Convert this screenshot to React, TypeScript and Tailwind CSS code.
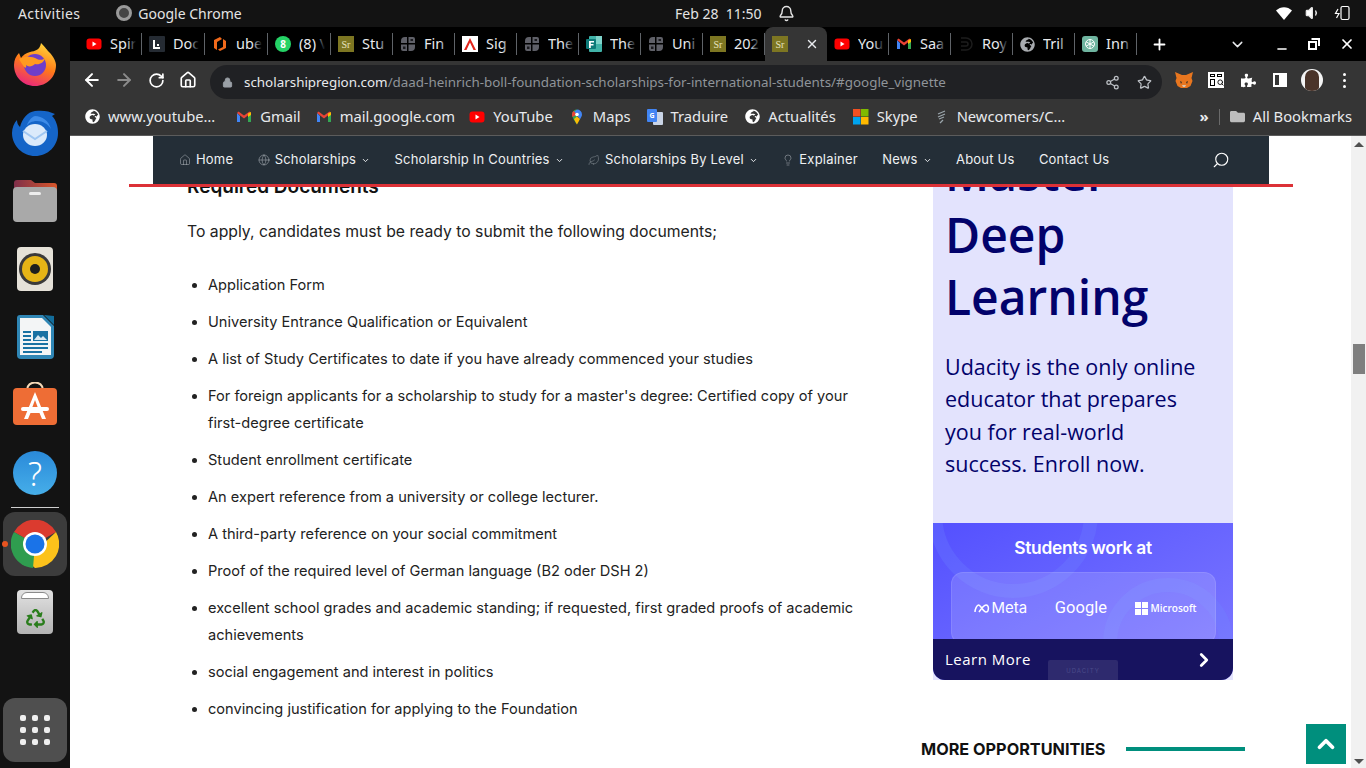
import type { ReactNode } from "react";
import { ArrowLeft, ArrowRight, Bell, ChevronDown, ChevronRight, ChevronUp, House, Lightbulb, Globe, Leaf, Lock, Minus, Plus, RotateCw, Search, Share2, Star, Volume1, X } from "lucide-react";
import { FaPuzzlePiece, FaFolder, FaGlobeAfrica, FaRecycle } from "react-icons/fa";

function YouTubeIcon() {
    return (
        <svg width="16" height="16" viewBox="0 0 16 16" className="shrink-0">
            <rect x="0.5" y="2.5" width="15" height="11" rx="3" fill="#f00" />
            <path d="M6.5 5.5v5l4-2.5z" fill="#fff" />
        </svg>
    );
}

function GmailIcon() {
    return (
        <svg width="16" height="16" viewBox="0 0 16 16" className="shrink-0">
            <path d="M1 4v9h3V7z" fill="#4285f4" />
            <path d="M15 4v9h-3V7z" fill="#34a853" />
            <path d="M1 4l7 5.4L15 4l-1.5-1.5L8 6.5 2.5 2.5z" fill="#ea4335" />
            <path d="M12 4.5L15 3v3l-3 2z" fill="#fbbc04" />
        </svg>
    );
}

function SrIcon() {
    return (
        <div className="w-4 h-4 shrink-0 bg-[#7d7622] flex items-center justify-center text-[10px] text-[#e8e4c0] font-['Liberation_Serif',serif]">
            Sr
        </div>
    );
}

function GridIcon() {
    return (
        <svg width="16" height="16" viewBox="0 0 16 16" className="shrink-0">
            <path d="M1 7V5a4 4 0 0 1 4-4h2v6zM8.500 1H13a2 2 0 0 1 2 2v4H8.500zM1 8.500h6V15H3a2 2 0 0 1-2-2zM8.500 8.500H15V11a4 4 0 0 1-4 4H8.500z" fill="#5f6068" />
            <path d="M3 10.500h2.500V13H3zM10.500 3H13v2h-2.500z" fill="#1a1a1e" />
        </svg>
    );
}

function GlobeFavicon() {
    return <FaGlobeAfrica size={15} className="shrink-0 text-white" />;
}

const tabs: { label: string; icon: ReactNode }[] = [
    { label: "Spir", icon: <YouTubeIcon /> },
    {
        label: "Doc",
        icon: (
            <svg width="16" height="16" viewBox="0 0 16 16" className="shrink-0">
                <rect width="16" height="16" rx="1" fill="#252b33" />
                <path d="M4 4h2v7h5v2H4zM8 8h2v2H8z" fill="#fff" />
            </svg>
        ),
    },
    {
        label: "ube",
        icon: (
            <svg width="16" height="16" viewBox="0 0 16 16" className="shrink-0">
                <path d="M8 1L2 4v8l3 2V6l5-3zM14 5v7l-6 3-2-1.500 5-2.500V3z" fill="#f26a1b" />
            </svg>
        ),
    },
    {
        label: "(8) V",
        icon: (
            <div className="relative w-4 h-4 shrink-0 rounded-full bg-[#25d366] flex items-center justify-center text-[10px] font-bold text-white">
                8
            </div>
        ),
    },
    { label: "Stu", icon: <SrIcon /> },
    { label: "Fin", icon: <GridIcon /> },
    {
        label: "Sig",
        icon: (
            <svg width="16" height="16" viewBox="0 0 16 16" className="shrink-0">
                <rect width="16" height="16" fill="#fff" />
                <path d="M8 2L2 14h2.500L8 6.500 11.500 14H14z" fill="#e1251b" />
            </svg>
        ),
    },
    { label: "The", icon: <GridIcon /> },
    {
        label: "The",
        icon: (
            <svg width="16" height="16" viewBox="0 0 16 16" className="shrink-0">
                <rect x="3" width="13" height="16" rx="1" fill="#41b3a8" />
                <rect x="10" width="6" height="8" fill="#7fd4cb" />
                <rect y="3" width="10" height="10" rx="1" fill="#0d7a78" />
                <path d="M3 5h5v1.500H4.800V8H7.500v1.500H4.800V12H3z" fill="#fff" />
            </svg>
        ),
    },
    { label: "Uni", icon: <GridIcon /> },
    { label: "202", icon: <SrIcon /> },
];

const tabsAfter: { label: string; icon: ReactNode }[] = [
    { label: "You", icon: <YouTubeIcon /> },
    { label: "Saa", icon: <GmailIcon /> },
    {
        label: "Roy",
        icon: (
            <svg width="16" height="16" viewBox="0 0 16 16" className="shrink-0" fill="none" stroke="#1c1c1c" strokeWidth="1.500">
                <path d="M3 2h5a6 6 0 0 1 0 12H3M3 6h5a2 2 0 0 1 0 4H3" />
            </svg>
        ),
    },
    { label: "Tril", icon: <FaGlobeAfrica size={15} className="shrink-0 text-[#a8abaf]" /> },
    {
        label: "Inn",
        icon: (
            <div className="w-4 h-4 shrink-0 rounded-[3px] bg-[#6fb5a0] flex items-center justify-center">
                <svg width="12" height="12" viewBox="0 0 12 12" fill="none" stroke="#fff" strokeWidth="1">
                    <circle cx="6" cy="6" r="4.500" />
                    <path d="M6 1.500v9M2 3.800l8 4.400M2 8.200l8-4.400" />
                </svg>
            </div>
        ),
    },
];

function Tab({ label, icon, wide }: { label: string; icon: ReactNode; wide?: boolean }) {
    return (
        <div className={`relative h-full shrink-0 flex items-center pl-[7px] gap-2 border-r border-[#5a5a5a] [border-image:linear-gradient(transparent_20%,#5f6368_20%,#5f6368_80%,transparent_80%)_1] ${wide ? "w-[63px]" : "w-[62px]"}`}>
            {icon}
            <div className="relative w-[26px] -mt-px overflow-hidden whitespace-nowrap text-[14.500px] text-[#e8eaed]">
                {label}
                <div className="absolute inset-y-0 right-0 w-2.5 bg-gradient-to-r from-transparent to-black" />
            </div>
        </div>
    );
}

const bookmarks: { label: string; icon: ReactNode; gap: string }[] = [
    { label: "www.youtube…", icon: <GlobeFavicon />, gap: "mr-[21px]" },
    { label: "Gmail", icon: <GmailIcon />, gap: "mr-[15px]" },
    { label: "mail.google.com", icon: <GmailIcon />, gap: "mr-[14px]" },
    { label: "YouTube", icon: <YouTubeIcon />, gap: "mr-[16px]" },
    {
        label: "Maps",
        icon: (
            <svg width="16" height="16" viewBox="0 0 16 16" className="shrink-0">
                <path d="M8 0.500a5 5 0 0 0-5 5c0 3.500 5 10 5 10z" fill="#34a853" />
                <path d="M8 0.500a5 5 0 0 1 5 5c0 1.500-1 3.200-2 4.700L5 3z" fill="#4285f4" />
                <path d="M4.500 2L8 5.500 3.500 8C3 7 3 6 3 5.500 3 4 3.500 3 4.500 2z" fill="#ea4335" />
                <path d="M11 10L8 15.500C7 14 6 12 5 10l3-2.500z" fill="#fbbc04" />
                <circle cx="8" cy="5.500" r="1.800" fill="#fff" />
            </svg>
        ),
        gap: "mr-[16px]",
    },
    {
        label: "Traduire",
        icon: (
            <svg width="16" height="16" viewBox="0 0 16 16" className="shrink-0">
                <rect x="6" y="3" width="10" height="13" rx="1" fill="#c9d4e6" />
                <rect width="10" height="13" rx="1" fill="#4285f4" />
                <text x="2.500" y="9" fontSize="7" fontWeight="700" fill="#fff">G</text>
            </svg>
        ),
        gap: "mr-[17px]",
    },
    { label: "Actualités", icon: <GlobeFavicon />, gap: "mr-[17px]" },
    {
        label: "Skype",
        icon: (
            <svg width="16" height="16" viewBox="0 0 16 16" className="shrink-0">
                <rect width="7.500" height="7.500" fill="#f25022" />
                <rect x="8" width="7.500" height="7.500" fill="#7fba00" />
                <rect y="8" width="7.500" height="7.500" fill="#00a4ef" />
                <rect x="8" y="8" width="7.500" height="7.500" fill="#ffb900" />
            </svg>
        ),
        gap: "mr-[15px]",
    },
    {
        label: "Newcomers/C…",
        icon: (
            <svg width="16" height="16" viewBox="0 0 16 16" className="shrink-0" fill="none" stroke="#9aa5ab" strokeWidth="1.300">
                <path d="M12 2L5 5M12 5L5 8M11 8l-5 2M10 11l-3 3" />
            </svg>
        ),
        gap: "",
    },
];

const docs = [
    "Application Form",
    "University Entrance Qualification or Equivalent",
    "A list of Study Certificates to date if you have already commenced your studies",
    "For foreign applicants for a scholarship to study for a master's degree: Certified copy of your first-degree certificate",
    "Student enrollment certificate",
    "An expert reference from a university or college lecturer.",
    "A third-party reference on your social commitment",
    "Proof of the required level of German language (B2 oder DSH 2)",
    "excellent school grades and academic standing; if requested, first graded proofs of academic achievements",
    "social engagement and interest in politics",
    "convincing justification for applying to the Foundation",
];

function DockSlot({ children }: { children: ReactNode }) {
    return <div className="h-[68px] flex items-center justify-center shrink-0">{children}</div>;
}

function Dock() {
    return (
        <aside className="w-[70px] shrink-0 bg-[#131313] flex flex-col pt-[4px] pb-[6px]">
            <DockSlot>
                <svg width="44" height="44" viewBox="0 0 44 44" className="-mt-[2px]">
                    <defs>
                        <linearGradient id="ffa" x1="0.7" y1="0" x2="0.3" y2="1">
                            <stop offset="0" stopColor="#ffd43a" />
                            <stop offset="0.5" stopColor="#ff7a18" />
                            <stop offset="1" stopColor="#e9257f" />
                        </linearGradient>
                    </defs>
                    <path d="M28 1c5 5 6 7 8 9 5 5 7 10 7 13 0 12-9 21-21 21S1 35 1 23c0-5 2-9 5-12l2 5c2-3 5-5 9-6 5-1 10-2 11-9z" fill="url(#ffa)" />
                    <circle cx="22" cy="23" r="11" fill="#6f3ec9" />
                    <path d="M6 17c6-3 13-3 18 0 4 2 7 0 8-1-1 5-6 7-10 6-3 3-7 3-9 1 1 5-2 3-7-6z" fill="#ff9a1f" />
                </svg>
            </DockSlot>
            <DockSlot>
                <svg width="48" height="48" viewBox="0 0 48 48">
                    <path d="M24 2c8-1 14 0 20 3l-3 2c4 4 6 10 6 17 0 13-10 23-23 23C12 47 1 37 1 24c0-5 2-10 5-13 0 3 1 5 3 7C11 10 16 3 24 2z" fill="#1565c8" />
                    <path d="M24 7c7 0 14 5 16 13-3-5-8-8-14-8-5 0-9 2-11 6 2-5 5-10 9-11z" fill="#3d8be8" />
                    <ellipse cx="24" cy="26" rx="12" ry="11" fill="#dbeafb" />
                    <path d="M12 22l12 8 12-8" fill="none" stroke="#9fc6f2" strokeWidth="2" />
                </svg>
            </DockSlot>
            <DockSlot>
                <svg width="44" height="44" viewBox="0 0 44 44">
                    <defs>
                        <linearGradient id="fold" x1="0" y1="0" x2="1" y2="0">
                            <stop offset="0" stopColor="#7e2f4a" />
                            <stop offset="1" stopColor="#d9572b" />
                        </linearGradient>
                    </defs>
                    <path d="M1 4a3 3 0 0 1 3-3h14l4 3h19a3 3 0 0 1 3 3v14H1z" fill="url(#fold)" />
                    <rect y="8" width="44" height="35" rx="4" fill="#a9a9a9" />
                    <rect x="16" y="13" width="12" height="3" rx="1.500" fill="#eee" />
                </svg>
            </DockSlot>
            <DockSlot>
                <svg width="36" height="44" viewBox="0 0 36 44">
                    <rect width="36" height="44" rx="4" fill="#e5e1d8" />
                    <circle cx="18" cy="22" r="16" fill="#3b3a3a" />
                    <circle cx="18" cy="22" r="13" fill="#e6b416" />
                    <circle cx="18" cy="22" r="5" fill="#1e1e1e" />
                </svg>
            </DockSlot>
            <DockSlot>
                <svg width="37" height="44" viewBox="0 0 37 44">
                    <path d="M3 0h23l11 11v29a4 4 0 0 1-4 4H4a4 4 0 0 1-4-4V3a3 3 0 0 1 3-3z" fill="#2f86b5" />
                    <path d="M3 3h22l9 9v28H3z" fill="#f3f5f6" />
                    <path d="M27 0l10 10V1z" fill="#136d9b" />
                    <path d="M6 16h8v2H6zM6 20h8v2H6zM6 24h8v2H6zM6 28h25v2H6zM6 32h25v2H6zM6 36h19v2H6z" fill="#1a72a3" />
                    <rect x="16" y="16" width="15" height="10" fill="#1a72a3" />
                    <path d="M17 25l4-5 3 3 2-2 4 4z" fill="#dbe9f1" />
                </svg>
            </DockSlot>
            <DockSlot>
                <svg width="44" height="44" viewBox="0 0 44 44" className="-mt-[2px]">
                    <path d="M14 8c0-10 16-10 16 0" fill="none" stroke="#f5d9b8" strokeWidth="2" />
                    <rect y="6" width="44" height="37" rx="4" fill="#ee6d35" />
                    <path d="M22 10L11 37h4l2.500-6h9l2.500 6h4zM19 26l3-8 3 8z" fill="#fff" />
                    <rect x="8" y="25" width="28" height="4" rx="2" fill="#fff" />
                </svg>
            </DockSlot>
            <DockSlot>
                <div className="w-[44px] h-[44px] rounded-full bg-gradient-to-b from-[#2a8ad9] to-[#46aee9] flex items-center justify-center text-white text-[33px] font-light font-['Noto_Sans',sans-serif] leading-none">
                    ?
                </div>
            </DockSlot>
            <div className="h-px bg-[#cfcfcf] mx-[11px] mb-[4px] shrink-0" />
            <div className="relative h-[64px] mx-[3px] rounded-xl bg-[#3c3c3c] flex items-center justify-center shrink-0">
                <div className="absolute -left-px top-[29px] w-[6px] h-[6px] rounded-full bg-[#e95420]" />
                <svg width="48" height="48" viewBox="0 0 48 48">
                    <path d="M24 24L3 12A24 24 0 0 1 45 12z" fill="#db3b2f" />
                    <path d="M45 12A24 24 0 0 1 24 48L15 40z" fill="#fcc21b" />
                    <path d="M24 24L3 12A24 24 0 0 0 22 48z" fill="#2f9d4f" />
                    <circle cx="24" cy="24" r="12" fill="#fff" />
                    <circle cx="24" cy="24" r="9.500" fill="#1a73e8" />
                </svg>
            </div>
            <div className="h-[68px] mt-[2px] flex items-center justify-center shrink-0">
                <div className="relative w-[36px] h-[44px] rounded-[4px] bg-gradient-to-b from-[#e2e2e2] to-[#b3b3b3] flex items-center justify-center pt-3">
                    <div className="absolute top-[2px] left-[4px] right-[4px] h-[7px] bg-white rounded-t-md border border-[#8a8a8a]" />
                    <FaRecycle size={19} className="text-[#2a7d1c]" />
                </div>
            </div>
            <div className="mt-auto h-[64px] mx-[3px] rounded-xl bg-[#4f4f4f] grid grid-cols-3 gap-[6px] p-[17px] shrink-0">
                {Array.from({ length: 9 }).map((_, i) => (
                    <div key={i} className="rounded-[2px] bg-[#efefef]" />
                ))}
            </div>
        </aside>
    );
}

function TopBar() {
    return (
        <header className="relative h-[27px] shrink-0 bg-[#131313] flex items-center pl-[18px] pr-[16px] pb-px text-[14px] text-[#e4e4e4] font-['Noto_Sans',sans-serif]">
            <span className="tracking-[0.4px]">Activities</span>
            <span className="ml-[36px] w-4 h-4 rounded-full border-[3px] border-[#9a9a9a] bg-[#444]" />
            <span className="ml-[6px]">Google Chrome</span>
            <div className="absolute left-[675px] top-0 h-full flex items-center gap-[16px] pb-px">
                <span className="whitespace-pre">Feb 28  11:50</span>
                <Bell size={17} />
            </div>
            <div className="ml-auto flex items-center gap-[13px]">
                <svg width="16" height="13" viewBox="0 0 16 13">
                    <path d="M0 3.500C4.500-1 11.500-1 16 3.500L8 13z" fill="#fff" />
                </svg>
                <Volume1 size={16} fill="#fff" />
                <svg width="16" height="16" viewBox="0 0 16 16" fill="none" stroke="#fff" strokeWidth="1.200">
                    <rect x="7" y="1.500" width="8" height="13" rx="1.500" />
                    <path d="M4 4L1.500 8.500H5L2.500 13" />
                </svg>
            </div>
        </header>
    );
}

function TabStrip() {
    return (
        <div className="relative h-[34px] shrink-0 bg-black flex items-stretch pl-[9px] font-['Noto_Sans',sans-serif]">
            {tabs.map((t, i) => (
                <Tab key={i} label={t.label} icon={t.icon} wide={i < 4} />
            ))}
            <div className="w-[62px] shrink-0 bg-[#353535] rounded-t-lg flex items-center pl-[7px] pr-2 justify-between">
                <SrIcon />
                <X size={14} strokeWidth={2.5} className="text-[#e8eaed]" />
            </div>
            {tabsAfter.map((t, i) => (
                <Tab key={i} label={t.label} icon={t.icon} />
            ))}
            <div className="flex items-center ml-[14px] text-white">
                <Plus size={17} strokeWidth={2.6} />
                <ChevronDown size={17} strokeWidth={2} className="ml-[61px] text-[#e8eaed]" />
                <Minus size={14} strokeWidth={2.5} className="ml-[29px] mt-[9px]" />
                <svg width="12" height="12" viewBox="0 0 12 12" fill="none" stroke="#fff" strokeWidth="2" className="ml-[19px]">
                    <path d="M3.500 1h7.500v7M1 4h7v7H1z" />
                </svg>
                <X size={16} strokeWidth={2.6} className="ml-[19px]" />
            </div>
        </div>
    );
}

function Toolbar() {
    return (
        <div className="h-[38px] shrink-0 bg-[#353535] flex items-center pl-[6px] text-white">
            <div className="w-8 flex justify-center">
                <ArrowLeft size={20} strokeWidth={2.4} />
            </div>
            <div className="w-8 flex justify-center">
                <ArrowRight size={20} strokeWidth={2.4} className="text-[#8b8b8b]" />
            </div>
            <div className="w-8 flex justify-center">
                <RotateCw size={17} strokeWidth={2.4} />
            </div>
            <div className="w-8 flex justify-center">
                <House size={18} strokeWidth={2.2} />
            </div>
            <div className="ml-[6px] w-[952px] h-[34px] mt-[4px] rounded-full bg-[#202124] flex items-center pl-[12px] pr-[10px] font-['Noto_Sans',sans-serif] text-[13.400px]">
                <Lock size={11} fill="#9aa0a6" className="text-[#9aa0a6]" />
                <span className="ml-[11px] text-[#e8eaed] whitespace-nowrap">scholarshipregion.com</span>
                <span className="text-[#8f9499] whitespace-nowrap">/daad-heinrich-boll-foundation-scholarships-for-international-students/#google_vignette</span>
                <Share2 size={15} strokeWidth={2} className="ml-auto text-[#bdc1c6]" />
                <Star size={15} strokeWidth={2} className="ml-[17px] text-[#bdc1c6]" />
            </div>
            <div className="ml-[13px] flex items-center">
                <svg width="18" height="18" viewBox="0 0 18 18">
                    <path d="M0 1l7 3h4l7-3-1.500 6 1 3-2 5-3.500 2H6l-3.500-2-2-5 1-3z" fill="#e8761f" />
                    <path d="M5 10l2 1-1 2zM13 10l-2 1 1 2z" fill="#33302a" />
                    <path d="M7 14h4l-1 2H8z" fill="#d8c3ad" />
                </svg>
                <div className="ml-[15px] w-4 h-4 bg-white grid grid-cols-2 gap-[2px] p-[2px]">
                    <div className="border border-black" />
                    <div className="border border-black" />
                    <div className="border border-black" />
                    <Search size={7} strokeWidth={3} className="text-black" />
                </div>
                <FaPuzzlePiece size={15} className="ml-[17px]" />
                <div className="ml-[17px] w-[14px] h-[14px] border-[2px] border-white flex justify-end">
                    <div className="w-[6px] bg-white" />
                </div>
                <div className="ml-[14px] w-[22px] h-[22px] rounded-full bg-[#f4f4f4] overflow-hidden flex justify-center">
                    <div className="w-[14px] h-[24px] mt-[1px] rounded-full bg-[#4a342a]" />
                </div>
                <div className="ml-[20px] flex flex-col gap-[3px]">
                    <div className="w-[3px] h-[3px] rounded-full bg-white" />
                    <div className="w-[3px] h-[3px] rounded-full bg-white" />
                    <div className="w-[3px] h-[3px] rounded-full bg-white" />
                </div>
            </div>
        </div>
    );
}

function BookmarksBar() {
    return (
        <div className="h-[37px] shrink-0 bg-[#353535] border-b border-[#5c5c5c] flex items-center pl-[15px] pr-[14px] pb-px text-[14.750px] text-[#e8eaed] font-['Noto_Sans',sans-serif] whitespace-nowrap">
            {bookmarks.map((b) => (
                <div key={b.label} className={`flex items-center gap-2 ${b.gap}`}>
                    {b.icon}
                    <span>{b.label}</span>
                </div>
            ))}
            <div className="ml-auto flex items-center">
                <span className="text-[15px] leading-none font-bold">»</span>
                <div className="w-px h-[16px] bg-[#6a6a6a] ml-[10px] mr-[10px]" />
                <FaFolder size={15} className="text-[#bdbdbd]" />
                <span className="ml-[8px]">All Bookmarks</span>
            </div>
        </div>
    );
}

function NavLink({ icon, label, caret }: { icon?: ReactNode; label: string; caret?: boolean }) {
    return (
        <div className="flex items-center whitespace-nowrap">
            {icon}
            <span>{label}</span>
            {caret && <ChevronDown size={9} strokeWidth={2.5} className="ml-[5px] mt-[1px]" />}
        </div>
    );
}

function SiteNav() {
    return (
        <>
            <nav className="absolute z-20 left-[83px] top-0 w-[1116px] h-[48px] bg-[#242e37] flex items-center pl-[26px] text-[13px] tracking-[0.2px] text-[#eef0f2] font-['Inter',sans-serif] gap-[24.400px]">
                <NavLink icon={<House size={12} strokeWidth={1} className="mr-[5px] text-[#b5bbc0]" />} label="Home" />
                <NavLink icon={<Globe size={12} strokeWidth={1} className="mr-[5px] text-[#b5bbc0]" />} label="Scholarships" caret />
                <NavLink label="Scholarship In Countries" caret />
                <NavLink icon={<Leaf size={12} strokeWidth={1} className="mr-[5px] text-[#8f979d]" />} label="Scholarships By Level" caret />
                <NavLink icon={<Lightbulb size={12} strokeWidth={1} className="mr-[5px] text-[#b5bbc0]" />} label="Explainer" />
                <NavLink label="News" caret />
                <NavLink label="About Us" />
                <NavLink label="Contact Us" />
                <Search size={18} strokeWidth={1.5} className="absolute right-[39px] top-[15px] text-white scale-x-[-1]" />
            </nav>
            <div className="absolute z-30 left-[59px] top-[48px] w-[1164px] h-[3px] bg-[#dc3137]" />
        </>
    );
}

function Article() {
    return (
        <article className="w-[680px] ml-[117px] shrink-0 font-['Inter',sans-serif] text-[14.600px] leading-[27px] text-[#222]">
            <h3 className="mt-[39px] text-[19px] font-semibold text-[#111] leading-[24px]">Required Documents</h3>
            <p className="mt-[19px] text-[15.750px]">To apply, candidates must be ready to submit the following documents;</p>
            <ul className="mt-[27px] list-disc pl-[21px] flex flex-col gap-[10px] marker:text-[#222]">
                {docs.map((d) => (
                    <li key={d}>{d}</li>
                ))}
            </ul>
        </article>
    );
}

function Sidebar() {
    return (
        <aside className="ml-[54px] w-[324px] shrink-0 flex flex-col items-start">
            <div className="ml-[12px] w-[300px] h-[544px] bg-[#e3e3fd] flex flex-col font-['Open_Sans',sans-serif] text-[#02026b]">
                <div className="px-[12px] pt-[6px] text-[48px] leading-[62px] font-semibold">
                    <div>Master</div>
                    <div>Deep</div>
                    <div>Learning</div>
                </div>
                <p className="pl-[12px] pr-[24px] mt-[23px] text-[21.500px] leading-[32.300px]">
                    Udacity is the only online educator that prepares you for real-world success. Enroll now.
                </p>
                <div className="relative mt-auto h-[157px] rounded-b-xl overflow-hidden bg-gradient-to-br from-[#5450ff] to-[#7f78ff] flex flex-col items-center">
                    <div className="absolute -left-[5px] -top-[95px] w-[170px] h-[170px] rounded-full border-[14px] border-[#6f88ff]/25" />
                    <div className="absolute left-[170px] top-[55px] w-[130px] h-[130px] rounded-full border-[14px] border-[#6f88ff]/25" />
                    <div className="relative mt-[14px] text-[17.400px] leading-[22px] font-semibold tracking-[-0.3px] text-white font-['Inter',sans-serif]">
                        Students work at
                    </div>
                    <div className="relative mt-[13px] w-[265px] h-[72px] rounded-xl border border-white/10 bg-white/15 flex items-center justify-between pl-[22px] pr-[18px] text-white">
                        <span className="flex items-center gap-[2px] text-[15px] font-['Inter',sans-serif]">
                            <svg width="16" height="9" viewBox="0 0 16 9" fill="none" stroke="#fff" strokeWidth="1.500">
                                <path d="M1 8c0-3 2-7 3.500-7C7 1 9 8 12 8c3 0 3.500-7 0-7-2 0-5 4-7 7" />
                            </svg>
                            Meta
                        </span>
                        <span className="text-[16.500px] font-['Roboto',sans-serif]">Google</span>
                        <span className="flex items-center gap-[3px] text-[10px] font-semibold">
                            <span className="grid grid-cols-2 gap-px w-[13px] h-[13px]">
                                <span className="bg-white" />
                                <span className="bg-white" />
                                <span className="bg-white" />
                                <span className="bg-white" />
                            </span>
                            Microsoft
                        </span>
                    </div>
                    <div className="absolute left-0 right-0 bottom-0 z-10 h-[41px] bg-[#17135f] flex items-center justify-between pl-[12px] pr-[18px] text-[15px] tracking-[0.5px] text-white">
                        <span>Learn More</span>
                        <ChevronRight size={22} strokeWidth={3} />
                    </div>
                    <div className="absolute left-[115px] bottom-0 w-[70px] h-[20px] z-20 bg-[#2e2a6e] rounded-t-[2px] flex items-center justify-center text-[6px] tracking-[1px] text-[#4b4a8a] font-['Inter',sans-serif]">
                        UDACITY
                    </div>
                </div>
            </div>
            <div className="mt-[58px] flex items-center font-['Inter',sans-serif]">
                <h4 className="text-[16.250px] leading-[22px] font-bold text-[#111] whitespace-nowrap">MORE OPPORTUNITIES</h4>
                <div className="ml-[21px] w-[119px] h-[4px] bg-[#008f7d]" />
            </div>
        </aside>
    );
}

function Scrollbar() {
    return (
        <div className="w-[15px] shrink-0 bg-[#f1f1f1] flex flex-col items-center pt-[6px] pb-[4px]">
            <div className="w-0 h-0 border-x-[5px] border-x-transparent border-b-[5px] border-b-[#505050]" />
            <div className="mt-[197px] w-[12px] h-[30px] bg-[#7f7f7f]" />
            <div className="mt-auto w-0 h-0 border-x-[5px] border-x-transparent border-t-[5px] border-t-[#505050]" />
        </div>
    );
}

function Page() {
    return (
        <div className="relative flex-1 min-h-0 flex bg-white overflow-hidden">
            <SiteNav />
            <div className="flex-1 min-w-0 flex items-start overflow-hidden">
                <Article />
                <Sidebar />
            </div>
            <Scrollbar />
            <button className="absolute z-10 left-[1236px] top-[588px] w-[40px] h-[40px] bg-[#008f7d] flex items-center justify-center text-white">
                <ChevronUp size={26} strokeWidth={3.5} />
            </button>
        </div>
    );
}

export default function App() {
    return (
        <div className="w-[1366px] h-[768px] flex flex-col overflow-hidden bg-[#131313]">
            <TopBar />
            <div className="flex-1 min-h-0 flex">
                <Dock />
                <div className="flex-1 min-w-0 flex flex-col">
                    <TabStrip />
                    <Toolbar />
                    <BookmarksBar />
                    <Page />
                </div>
            </div>
        </div>
    );
}
